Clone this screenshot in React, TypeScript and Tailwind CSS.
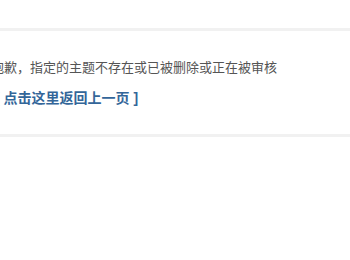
export default function App() {
  return (
    <div className="w-[350px] h-[260px] overflow-hidden bg-white font-['Liberation_Sans','Noto_Sans_CJK_SC',sans-serif]">
      <div className="mt-[28px] h-[109px] border-y-[3px] border-[#f1f1f1] flex flex-col">
        <p className="mt-[27px] -ml-[9px] whitespace-nowrap text-[13px] leading-[20px] text-[#555]">
          抱歉，指定的主题不存在或已被删除或正在被审核
        </p>
        <p className="mt-[10px] -ml-[5px] whitespace-nowrap text-[14px] leading-[20px] font-bold text-[#336699]">
          <a href="#">[ 点击这里返回上一页 ]</a>
        </p>
      </div>
    </div>
  )
}
